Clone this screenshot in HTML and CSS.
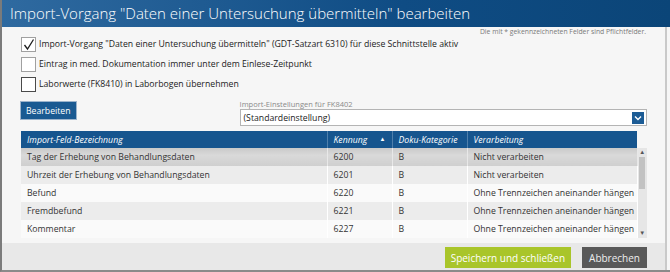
FILE: index.html
```html
<!DOCTYPE html>
<html lang="de">

<head>
  <meta charset="UTF-8">
  <title>Import-Vorgang bearbeiten</title>
  <link rel="stylesheet" href="styles.css">
</head>

<body>
  <div class="window">
    <div class="titlebar">Import-Vorgang "Daten einer Untersuchung übermitteln" bearbeiten</div>

    <div class="content">
      <p class="note">Die mit * gekennzeichneten Felder sind Pflichtfelder.</p>

      <label class="check-row">
        <span class="box">
          <svg width="13" height="13" viewBox="0 0 13 13"><path d="M2.5 7 L5.5 11 L11.5 1.5" fill="none" stroke="#1e1e1e" stroke-width="1.3"/></svg>
        </span>Import-Vorgang "Daten einer Untersuchung übermitteln" (GDT-Satzart 6310) für diese Schnittstelle aktiv</label>
      <label class="check-row"><span class="box"></span>Eintrag in med. Dokumentation immer unter dem Einlese-Zeitpunkt</label>
      <label class="check-row"><span class="box dark"></span>Laborwerte (FK8410) in Laborbogen übernehmen</label>

      <div class="toolbar">
        <button class="btn-blue">Bearbeiten</button>
        <div class="setting">
          <span class="setting-label">Import-Einstellungen für FK8402</span>
          <div class="select">
            <span>(Standardeinstellung)</span>
            <span class="select-arrow">
              <svg width="8" height="6" viewBox="0 0 8 6"><path d="M1 1.5 L4 4.5 L7 1.5" fill="none" stroke="#fff" stroke-width="1.4"/></svg>
            </span>
          </div>
        </div>
      </div>

      <div class="grid">
        <table class="fields">
          <thead>
            <tr>
              <th class="c1">Import-Feld-Bezeichnung</th>
              <th class="c2">Kennung <span class="sort">&#9650;</span></th>
              <th class="c3">Doku-Kategorie</th>
              <th class="c4">Verarbeitung</th>
            </tr>
          </thead>
          <tbody>
            <tr class="selected"><td>Tag der Erhebung von Behandlungsdaten</td><td>6200</td><td>B</td><td>Nicht verarbeiten</td></tr>
            <tr class="alt"><td>Uhrzeit der Erhebung von Behandlungsdaten</td><td>6201</td><td>B</td><td>Nicht verarbeiten</td></tr>
            <tr><td>Befund</td><td>6220</td><td>B</td><td>Ohne Trennzeichen aneinander hängen</td></tr>
            <tr class="alt"><td>Fremdbefund</td><td>6221</td><td>B</td><td>Ohne Trennzeichen aneinander hängen</td></tr>
            <tr><td>Kommentar</td><td>6227</td><td>B</td><td>Ohne Trennzeichen aneinander hängen</td></tr>
          </tbody>
        </table>
        <div class="scrollbar">
          <span class="arrow">&#9650;</span>
          <div class="thumb"></div>
          <span class="arrow down">&#9660;</span>
        </div>
      </div>
    </div>

    <div class="footer">
      <button class="btn-green">Speichern und schließen</button>
      <button class="btn-dark">Abbrechen</button>
    </div>
  </div>
</body>

</html>
```

FILE: styles.css
```css
* {
  margin: 0;
  padding: 0;
  box-sizing: border-box;
}

body {
  font-family: "Open Sans", "Noto Sans", sans-serif;
  background-color: #f4f4f4;
  color: #333;
}

.window {
  width: 670px;
  height: 272px;
  display: flex;
  flex-direction: column;
  border-left: 2px solid #7b7b7b;
  border-bottom: 2px solid #8a8a8a;
  background-color: #f6f6f6;
}

.titlebar {
  height: 27px;
  padding-left: 8px;
  line-height: 27px;
  font-size: 15px;
  font-weight: 300;
  color: #fff;
  white-space: nowrap;
  background: linear-gradient(to right, #2f6aa0, #0f4c84 60%, #0b4578);
}

.content {
  height: 216px;
  padding: 0 18px 0 19px;
  border-right: 2px solid #c9c9c9;
  margin-right: 3px;
}

.note {
  height: 7px;
  padding-right: 1px;
  font-size: 6.8px;
  line-height: 10px;
  color: #7a7a7a;
  text-align: right;
}

.check-row {
  display: flex;
  align-items: center;
  height: 20px;
  font-size: 8.7px;
  color: #222;
  white-space: nowrap;
}

.box {
  display: flex;
  align-items: center;
  justify-content: center;
  width: 15px;
  height: 15px;
  margin-right: 3px;
  border: 1px solid #a0a0a0;
  background-color: #fff;
}

.box.dark {
  border: 1.5px solid #4a4a4a;
}

.toolbar {
  display: flex;
  align-items: flex-start;
  margin-top: 5px;
}

.btn-blue {
  margin-top: 3px;
  height: 17px;
  padding: 0 5px;
  border: none;
  font-family: inherit;
  font-size: 8.7px;
  color: #fff;
  background-color: #1a5a92;
  box-shadow: 0 0 0 1px #9db4cc;
}

.setting {
  display: flex;
  flex-direction: column;
  flex: 1;
  margin-left: 164px;
}

.setting-label {
  height: 10px;
  font-size: 7.5px;
  line-height: 10px;
  color: #8a8a8a;
}

.select {
  display: flex;
  align-items: center;
  justify-content: space-between;
  height: 17px;
  padding: 0 2px 0 3px;
  border: 1px solid #b4b4b4;
  background-color: #fff;
  font-size: 8.7px;
  color: #222;
}

.select-arrow {
  display: flex;
  align-items: center;
  justify-content: center;
  width: 12px;
  height: 12px;
  background-color: #1c5c95;
}

.grid {
  display: flex;
  margin-top: 5px;
}

.fields {
  width: 616px;
  border-collapse: collapse;
  table-layout: fixed;
  font-size: 8.7px;
}

.fields th {
  height: 17px;
  padding: 0 6px;
  text-align: left;
  font-weight: normal;
  font-style: italic;
  color: #fff;
  white-space: nowrap;
  background-color: #16558e;
  border-right: 1px solid #4f7fab;
}

.fields th:last-child {
  border-right: none;
}

.c1 { width: 306px; }
.c2 { width: 65px; }
.c3 { width: 75px; }
.c4 { width: 170px; }

.sort {
  float: right;
  font-size: 6px;
  font-style: normal;
  margin-top: 1px;
}

.fields td {
  height: 18px;
  padding: 0 5px 0 6px;
  color: #333;
  white-space: nowrap;
  overflow: hidden;
  border-right: 1px solid #fff;
  background-color: #fafafa;
}

.fields tr.alt td {
  background-color: #ececec;
}

.fields tr.selected td {
  background: linear-gradient(#c9c9c9, #d9d9d9 40%, #cfcfcf);
  border-right-color: #e8e8e8;
}

.scrollbar {
  display: flex;
  flex-direction: column;
  align-items: center;
  width: 10px;
  margin-top: 17px;
  height: 90px;
  background-color: #e6e6e6;
}

.arrow {
  font-size: 6px;
  line-height: 9px;
  color: #555;
}

.thumb {
  width: 6px;
  height: 32px;
  background-color: #c2c2c2;
}

.arrow.down {
  margin-top: auto;
}

.footer {
  display: flex;
  justify-content: flex-end;
  gap: 11px;
  height: 27px;
  padding: 4px 18px 2px 0;
  background-color: #e8e8e8;
  margin-right: 3px;
  border-right: 2px solid #c9c9c9;
}

.btn-green,
.btn-dark {
  height: 21px;
  border: none;
  font-family: inherit;
  font-size: 10px;
  color: #fff;
}

.btn-green {
  padding: 0 6px;
  background-color: #a9c52a;
}

.btn-dark {
  padding: 0 7px;
  background-color: #595959;
  color: #eee;
}
```
